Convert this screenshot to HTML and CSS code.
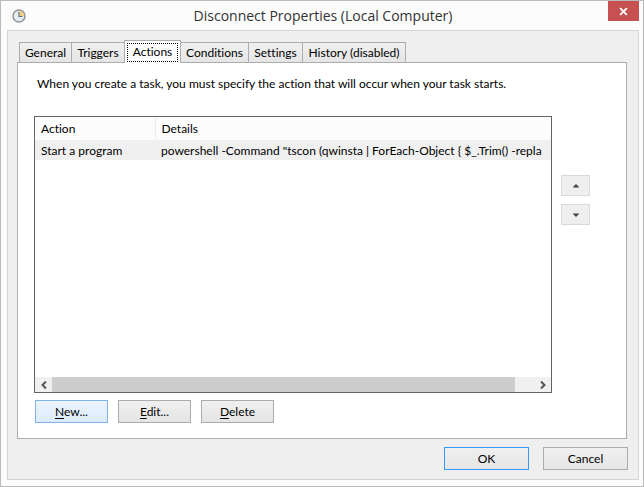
FILE: index.html
```html
<!DOCTYPE html>
<html lang="en">
<head>
<meta charset="utf-8">
<title>Disconnect Properties (Local Computer)</title>
<link rel="stylesheet" href="styles.css">
</head>
<body>
<main class="window">
  <header class="titlebar">
    <svg class="clock" viewBox="0 0 14 14" aria-hidden="true">
      <circle cx="7" cy="7" r="6" fill="#e3edf3" stroke="#909497" stroke-width="1.500"/>
      <path d="M7 7V1.800A5.200 5.200 0 0 1 12.200 7Z" fill="#f6cf86"/>
      <path d="M7 3V7.500H10.500" fill="none" stroke="#5f7587" stroke-width="1.200"/>
    </svg>
    <h1 class="title">Disconnect Properties (Local Computer)</h1>
    <button class="close" type="button" aria-label="Close">
      <svg viewBox="0 0 8 8" aria-hidden="true"><path d="M1 1L7 7M7 1L1 7" stroke="#fff" stroke-width="1.700"/></svg>
    </button>
  </header>
  <div class="client">
    <div class="tabs" role="tablist">
      <button class="tab" type="button" role="tab">General</button>
      <button class="tab" type="button" role="tab">Triggers</button>
      <button class="tab active" type="button" role="tab" aria-selected="true"><span class="focus">Actions</span></button>
      <button class="tab" type="button" role="tab">Conditions</button>
      <button class="tab" type="button" role="tab">Settings</button>
      <button class="tab" type="button" role="tab">History (disabled)</button>
    </div>
    <section class="panel" role="tabpanel">
      <p class="intro">When you create a task, you must specify the action that will occur when your task starts.</p>
      <div class="editor">
        <div class="list">
          <table class="actions">
            <thead><tr><th class="kind">Action</th><th>Details</th></tr></thead>
            <tbody><tr><td>Start a program</td><td>powershell -Command "tscon (qwinsta | ForEach-Object { $_.Trim() -repla</td></tr></tbody>
          </table>
          <div class="scrollbar">
            <button class="scroll" type="button" aria-label="Scroll left"><svg viewBox="0 0 8 8" aria-hidden="true"><path d="M6 0.500L2.500 4L6 7.500" fill="none" stroke="#555" stroke-width="2"/></svg></button>
            <div class="track"><div class="thumb"></div></div>
            <button class="scroll" type="button" aria-label="Scroll right"><svg viewBox="0 0 8 8" aria-hidden="true"><path d="M2 0.500L5.500 4L2 7.500" fill="none" stroke="#555" stroke-width="2"/></svg></button>
          </div>
        </div>
        <div class="order">
          <button class="move" type="button" aria-label="Move up"><svg viewBox="0 0 6 4" aria-hidden="true"><path d="M0 3.500V3L3 0L6 3V3.500Z" fill="#444"/></svg></button>
          <button class="move" type="button" aria-label="Move down"><svg viewBox="0 0 6 4" aria-hidden="true"><path d="M0 0.500V1L3 4L6 1V0.500Z" fill="#444"/></svg></button>
        </div>
      </div>
      <div class="commands">
        <button class="button hot" type="button"><u>N</u>ew...</button>
        <button class="button" type="button"><u>E</u>dit...</button>
        <button class="button" type="button"><u>D</u>elete</button>
      </div>
    </section>
    <footer class="footer">
      <button class="button wide primary" type="button">OK</button>
      <button class="button wide" type="button">Cancel</button>
    </footer>
  </div>
</main>
</body>
</html>
```
FILE: styles.css
```css
* {
  box-sizing: border-box;
}

body {
  margin: 0;
  background: #fcfcfc;
  color: #000;
  font: 12px/16px Lato, "Open Sans", sans-serif;
  font-variant-ligatures: none;
}

button {
  margin: 0;
  padding: 0;
  border: 0;
  color: inherit;
  font: inherit;
  font-variant-ligatures: none;
}

svg {
  display: block;
}

.window {
  display: flex;
  flex-direction: column;
  min-height: 100vh;
  padding: 0 4px 6px 6px;
  border: 1px solid #bbb;
  background: #fcfcfc;
}

.titlebar {
  display: grid;
  grid-template-columns: 31px 1fr 31px;
  height: 29px;
}

.clock {
  width: 14px;
  height: 14px;
  margin: 8px 0 0 5px;
}

.title {
  margin: 0;
  font-family: "Open Sans", sans-serif;
  font-size: 14px;
  font-weight: 400;
  line-height: 29px;
  text-align: center;
  color: #333;
  white-space: nowrap;
}

.close {
  display: grid;
  place-items: center;
  height: 20px;
  background: #c75050;
}

.close svg {
  width: 9px;
  height: 9px;
}

.client {
  display: flex;
  flex: 1;
  flex-direction: column;
  padding: 9px 10px 9px 9px;
  border: 1px solid #d5d5d5;
  background: #efefef;
}

.tabs {
  position: relative;
  z-index: 1;
  display: grid;
  grid-template-columns: 52px 53px 56px 68px 54px 103px;
  align-items: end;
  margin: 0 0 -1px 2px;
}

.tab {
  height: 21px;
  margin-right: -1px;
  border: 1px solid #acacac;
  background: linear-gradient(#f0f0f0, #e5e5e5);
  line-height: 18px;
  white-space: nowrap;
}

.tab.active {
  height: 23px;
  padding: 1px 2px 0;
  border-bottom: 0;
  background: #fff;
}

.focus {
  display: block;
  height: 19px;
  border: 1px dotted #000;
  line-height: 16px;
}

.panel {
  display: flex;
  flex: 1;
  flex-direction: column;
  margin-right: 1px;
  padding: 13px 36px 15px 16px;
  border: 1px solid #acacac;
  background: #fff;
}

.intro {
  margin: 0 0 24px 3px;
  white-space: nowrap;
}

.editor {
  display: flex;
  flex: 1;
  gap: 9px;
}

.list {
  display: flex;
  flex: 1;
  flex-direction: column;
  justify-content: space-between;
  min-width: 0;
  border: 1px solid #646464;
}

.actions {
  width: 100%;
  border-collapse: collapse;
  table-layout: fixed;
}

.actions th,
.actions td {
  overflow: hidden;
  padding: 0 0 0 6px;
  font-weight: 400;
  text-align: left;
  white-space: nowrap;
}

.actions th {
  height: 23px;
  background: #fcfcfc;
}

.actions .kind {
  width: 120px;
  border-right: 1px solid #e3eef5;
}

.actions td {
  height: 20px;
  padding-top: 1px;
  background: #f0f0f0;
}

.scrollbar {
  display: flex;
  height: 15px;
  background: #f0f0f0;
}

.scroll {
  display: grid;
  place-items: center;
  width: 17px;
  background: #f0f0f0;
}

.scroll svg {
  width: 8px;
  height: 8px;
}

.track {
  flex: 1;
}

.thumb {
  width: 96%;
  height: 100%;
  background: #cdcdcd;
}

.order {
  display: flex;
  flex-direction: column;
  gap: 8px;
  padding-top: 59px;
}

.move {
  display: grid;
  place-items: center;
  width: 29px;
  height: 21px;
  border: 1px solid #d9d9d9;
  background: #efefef;
}

.move svg {
  width: 6px;
  height: 4px;
}

.commands {
  display: flex;
  gap: 10px;
  margin: 7px 0 0 1px;
}

.button {
  width: 73px;
  height: 23px;
  border: 1px solid #acacac;
  background: linear-gradient(#f0f0f0, #e5e5e5);
  line-height: 20px;
}

.button u {
  text-underline-offset: 2px;
}

.button.hot {
  border-color: #7eb4ea;
  background: linear-gradient(#ecf4fc, #dcecfc);
}

.footer {
  display: flex;
  justify-content: flex-end;
  gap: 14px;
  margin-top: 8px;
}

.button.wide {
  width: 85px;
}

.button.primary {
  border-color: #3399ff;
}
```
